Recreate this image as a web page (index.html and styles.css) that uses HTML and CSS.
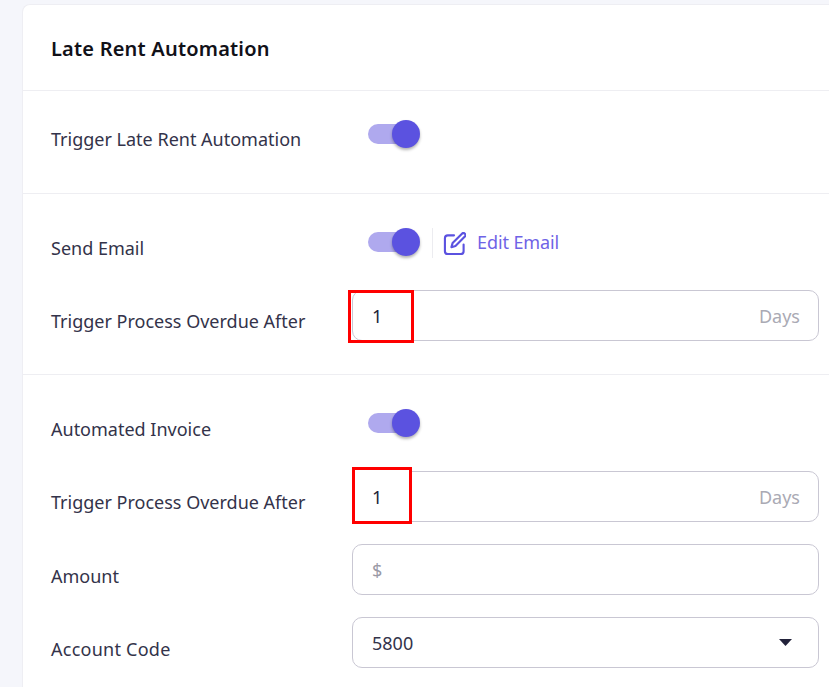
FILE: index.html
```html
<!DOCTYPE html>
<html lang="en">
<head>
<meta charset="utf-8">
<title>Late Rent Automation</title>
<link rel="stylesheet" href="styles.css">
</head>
<body>
<main class="card">
  <h1 class="card-title">Late Rent Automation</h1>

  <section class="section section-first">
    <div class="row">
      <label class="label">Trigger Late Rent Automation</label>
      <div class="control-inline control-first">
        <span class="switch"><span class="switch-track"></span><span class="switch-thumb"></span></span>
      </div>
    </div>
  </section>

  <section class="section">
    <div class="row">
      <label class="label">Send Email</label>
      <div class="control-inline">
        <span class="switch"><span class="switch-track"></span><span class="switch-thumb"></span></span>
        <span class="vr"></span>
        <a class="edit-link">
          <svg class="edit-icon" viewBox="0 0 24 24" fill="none" stroke="currentColor" stroke-width="2.2" stroke-linecap="round" stroke-linejoin="round">
            <path d="M11.5 3.5H5a3 3 0 0 0-3 3V20a3 3 0 0 0 3 3h13.5a3 3 0 0 0 3-3v-7"/>
            <path d="M19.8 1.8a2.1 2.1 0 0 1 3 3L13 14.6l-4.2 1.2 1.2-4.2z"/>
          </svg>
          <span class="edit-text">Edit Email</span>
        </a>
      </div>
    </div>
    <div class="row">
      <label class="label">Trigger Process Overdue After</label>
      <div class="field">
        <input class="field-input" type="text" value="1">
        <span class="field-suffix">Days</span>
        <span class="mark mark-a"></span>
      </div>
    </div>
  </section>

  <section class="section">
    <div class="row">
      <label class="label">Automated Invoice</label>
      <div class="control-inline">
        <span class="switch"><span class="switch-track"></span><span class="switch-thumb"></span></span>
      </div>
    </div>
    <div class="row">
      <label class="label">Trigger Process Overdue After</label>
      <div class="field">
        <input class="field-input" type="text" value="1">
        <span class="field-suffix">Days</span>
        <span class="mark mark-b"></span>
      </div>
    </div>
    <div class="row">
      <label class="label label-low">Amount</label>
      <div class="field">
        <input class="field-input" type="text" placeholder="$">
      </div>
    </div>
    <div class="row">
      <label class="label label-low label-wide">Account Code</label>
      <div class="field field-select">
        <span class="field-value">5800</span>
        <svg class="caret" viewBox="0 0 13 7"><path d="M0 0h13L6.5 7z"/></svg>
      </div>
    </div>
  </section>
</main>
</body>
</html>
```

FILE: styles.css
```css
* { box-sizing: border-box; }

html, body {
  height: 100%;
}

body {
  margin: 0;
  background: #f5f6fb;
  overflow: hidden;
  font-family: "Noto Sans", "Open Sans", sans-serif;
  color: #33334a;
}

.card {
  width: 807px;
  margin: 4px 0 0 22px;
  background: #fff;
  border: 1px solid #eeeef3;
  border-right: none;
  border-radius: 8px 0 0 8px;
}

.card-title {
  margin: 0;
  height: 86px;
  padding: 29px 28px 0;
  font-size: 20px;
  line-height: 30px;
  font-weight: 600;
  letter-spacing: .2px;
  color: #111118;
  border-bottom: 1px solid #eeeef2;
}

.section {
  display: flex;
  flex-direction: column;
  gap: 22px;
  padding: 23px 0 33px 28px;
  border-bottom: 1px solid #eeeef2;
}

.section-first {
  padding: 17px 0 34px 28px;
}

.section:last-child {
  border-bottom: none;
}

.row {
  display: grid;
  grid-template-columns: 301px 467px;
  height: 51px;
}

.label {
  padding-top: 19px;
  font-size: 18px;
  line-height: 24px;
  color: #33334a;
}

.label-low {
  padding-top: 20px;
}

.label-wide {
  letter-spacing: .25px;
}

.control-inline {
  display: flex;
  align-items: flex-start;
  padding: 11px 0 0 16px;
}

.control-first {
  padding-top: 12px;
}

.switch {
  position: relative;
  flex: none;
  display: block;
  width: 52px;
  height: 28px;
}

.switch-track {
  position: absolute;
  left: 0;
  top: 4px;
  width: 44px;
  height: 20px;
  border-radius: 10px;
  background: #afa9ee;
}

.switch-thumb {
  position: absolute;
  left: 24px;
  top: 0;
  width: 28px;
  height: 28px;
  border-radius: 50%;
  background: #5b52e0;
  box-shadow: 0 2px 3px rgba(0, 0, 0, .3);
}

.vr {
  flex: none;
  width: 1px;
  height: 30px;
  margin: 0 10px 0 12px;
  background: #ececf0;
}

.edit-link {
  display: flex;
  align-items: center;
  gap: 11px;
  height: 30px;
  font-size: 18px;
  letter-spacing: -.1px;
  color: #6f63e6;
}

.edit-text {
  margin-bottom: 2px;
}

.edit-icon {
  width: 23px;
  height: 23px;
  color: #5b52e0;
}

.field {
  position: relative;
  display: flex;
  align-items: center;
  height: 51px;
  padding: 0 18px 0 19px;
  border: 1px solid #c9c7d3;
  border-radius: 10px;
  background: #fff;
  font-size: 18px;
}

.field-select {
  padding-right: 26px;
}

.field-input {
  position: relative;
  z-index: 2;
  flex: 1;
  min-width: 0;
  padding: 0;
  border: none;
  outline: none;
  background: transparent;
  font: inherit;
  color: #22223a;
}

.field-input::placeholder {
  color: #9a9aa6;
  opacity: 1;
}

.field-suffix {
  position: relative;
  z-index: 2;
  color: #aaaab4;
}

.field-value {
  flex: 1;
}

.caret {
  width: 13px;
  height: 7px;
  fill: #22223a;
}

.mark {
  position: absolute;
  border: 3px solid #f00;
}

.mark-a {
  left: -5px;
  top: -1px;
  width: 66px;
  height: 53px;
}

.mark-b {
  left: -1px;
  top: -5px;
  width: 60px;
  height: 57px;
  background: #fff;
}
```
